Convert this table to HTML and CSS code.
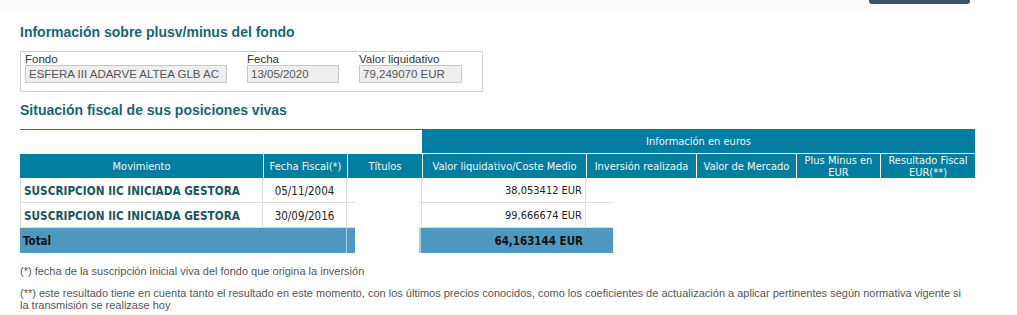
FILE: index.html
```html
<!DOCTYPE html>
<html lang="es">
<head>
<meta charset="utf-8">
<link rel="stylesheet" href="styles.css">
</head>
<body>
<div class="topbar"><span class="topbtn"></span></div>
<main class="content">
  <h2 class="title">Información sobre plusv/minus del fondo</h2>
  <div class="infobox">
    <div class="field f1"><label>Fondo</label><div class="input w-fondo">ESFERA III ADARVE ALTEA GLB AC</div></div>
    <div class="field f2"><label>Fecha</label><div class="input w-fecha">13/05/2020</div></div>
    <div class="field f3"><label>Valor liquidativo</label><div class="input w-valor">79,249070 EUR</div></div>
  </div>
  <h2 class="title t2">Situación fiscal de sus posiciones vivas</h2>
  <div class="tbl">
    <div class="hrow1">
      <div class="hblank"></div>
      <div class="hgroup">Información en euros</div>
    </div>
    <div class="hrow2">
      <div class="th c-mov">Movimiento</div>
      <div class="th c-fec">Fecha Fiscal(*)</div>
      <div class="th c-tit">Títulos</div>
      <div class="th c-val">Valor liquidativo/Coste Medio</div>
      <div class="th c-inv">Inversión realizada</div>
      <div class="th c-mer">Valor de Mercado</div>
      <div class="th c-plus">Plus Minus en EUR</div>
      <div class="th c-res">Resultado Fiscal EUR(**)</div>
    </div>
    <div class="brow">
      <div class="td c-mov mov">SUSCRIPCION IIC INICIADA GESTORA</div>
      <div class="td c-fec center">05/11/2004</div>
      <div class="sp sp8"></div>
      <div class="gap"></div>
      <div class="sp sp2"></div>
      <div class="td c-vald num">38,053412 EUR</div>
      <div class="sp sp27"></div>
    </div>
    <div class="brow">
      <div class="td c-mov mov">SUSCRIPCION IIC INICIADA GESTORA</div>
      <div class="td c-fec center">30/09/2016</div>
      <div class="sp sp8"></div>
      <div class="gap"></div>
      <div class="sp sp2"></div>
      <div class="td c-vald num">99,666674 EUR</div>
      <div class="sp sp27"></div>
    </div>
    <div class="trow">
      <div class="tt t-lbl">Total</div>
      <div class="tt t-sp"></div>
      <div class="gap"></div>
      <div class="tt t-val">64,163144 EUR</div>
    </div>
  </div>
  <p class="note n1">(*) fecha de la suscripción inicial viva del fondo que origina la inversión</p>
  <p class="note n2">(**) este resultado tiene en cuenta tanto el resultado en este momento, con los últimos precios conocidos, como los coeficientes de actualización a aplicar pertinentes según normativa vigente si la transmisión se realizase hoy</p>
</main>
</body>
</html>
```

FILE: styles.css
```css
html, body { margin: 0; padding: 0; background: #fff; }
body { font-family: "Liberation Sans", Arial, sans-serif; }

.topbar {
  width: 973px;
  height: 10px;
  background: #fafafa;
  display: flex;
  justify-content: flex-end;
}
.topbtn {
  width: 101px;
  height: 4px;
  margin-right: 3px;
  background: #3e5263;
  border-radius: 0 0 3px 3px;
}

.content { padding-left: 20px; }

.title {
  margin: 14px 0 0 0;
  font-size: 14px;
  line-height: 17px;
  font-weight: bold;
  color: #17676f;
}
.t2 { margin-top: 10px; }

.infobox {
  margin-top: 10px;
  width: 457px;
  height: 39px;
  border: 1px solid #cccccc;
  display: flex;
  padding-left: 4px;
  box-sizing: content-box;
}
.field { display: flex; flex-direction: column; }
.f2 { margin-left: 20px; }
.f3 { margin-left: 20px; }
.field label {
  font-size: 11.5px;
  line-height: 12px;
  color: #333;
  margin-top: 1px;
}
.input {
  height: 16px;
  border: 1px solid #c8c8c8;
  background: #eeeeee;
  color: #555;
  font-size: 11.5px;
  line-height: 16px;
  padding-left: 3px;
  white-space: nowrap;
  overflow: hidden;
  box-sizing: content-box;
}
.w-fondo { width: 197px; }
.w-fecha { width: 87px; }
.w-valor { width: 98px; }

.tbl {
  margin-top: 10px;
  width: 955px;
  font-family: "DejaVu Sans Condensed", "DejaVu Sans", sans-serif;
  font-stretch: condensed;
  font-size: 11px;
}
.hrow1 { display: flex; height: 24px; }
.hblank { width: 402px; border-top: 1px solid #1c7a8f; }
.hgroup {
  width: 553px;
  background: #037ea0;
  color: #f2f8f8;
  text-align: center;
  line-height: 25px;
}
.hrow2 {
  display: flex;
  height: 25px;
  background: #037ea0;
  border-top: 1px solid #fff;
  box-sizing: border-box;
}
.th {
  color: #f2f8f8;
  text-align: center;
  display: flex;
  align-items: center;
  justify-content: center;
  line-height: 12px;
  border-left: 1px solid #fff;
  box-sizing: border-box;
  padding: 1px 2px 0 2px;
}
.hrow2 .th:first-child { border-left: none; }
.c-mov { width: 243px; }
.c-fec { width: 84px; }
.c-tit { width: 75px; }
.c-val { width: 164px; }
.c-inv { width: 110px; }
.c-mer { width: 100px; }
.c-plus { width: 84px; padding: 1px 6px 0 6px; }
.c-res { width: 95px; padding: 1px 5px 0 5px; }

.brow { display: flex; height: 25px; }
.td {
  box-sizing: border-box;
  border-bottom: 1px solid #dcdcdc;
  border-right: 1px solid #dcdcdc;
  line-height: 26px;
  color: #222;
  white-space: nowrap;
}
.brow .c-mov { border-left: 1px solid #dcdcdc; }
.mov {
  font-weight: bold;
  font-size: 11.7px;
  color: #17565b;
  padding-left: 3px;
}
.center { text-align: center; font-size: 11.5px; }
.c-vald {
  width: 165px;
  border-left: 1px solid #dcdcdc;
}
.num { text-align: right; padding-right: 3px; }
.sp { border-bottom: 1px solid #dcdcdc; box-sizing: border-box; }
.sp8 { width: 8px; }
.sp2 { width: 2px; }
.sp27 { width: 27px; }
.gap { width: 64px; }

.trow { display: flex; height: 25px; }
.tt {
  background: #4f98bf;
  box-sizing: border-box;
  line-height: 26px;
  font-weight: bold;
  color: #111;
  font-size: 11.5px;
}
.t-lbl { width: 327px; padding-left: 3px; border-right: 1px solid #a9cde0; }
.t-sp { width: 8px; }
.t-val { width: 194px; text-align: right; padding-right: 30px; border-left: 2px solid #a9cde0; }

.note {
  margin: 0;
  font-size: 11px;
  line-height: 12px;
  color: #555;
  width: 945px;
}
.n1 { margin-top: 12px; }
.n2 { margin-top: 10px; }
```
